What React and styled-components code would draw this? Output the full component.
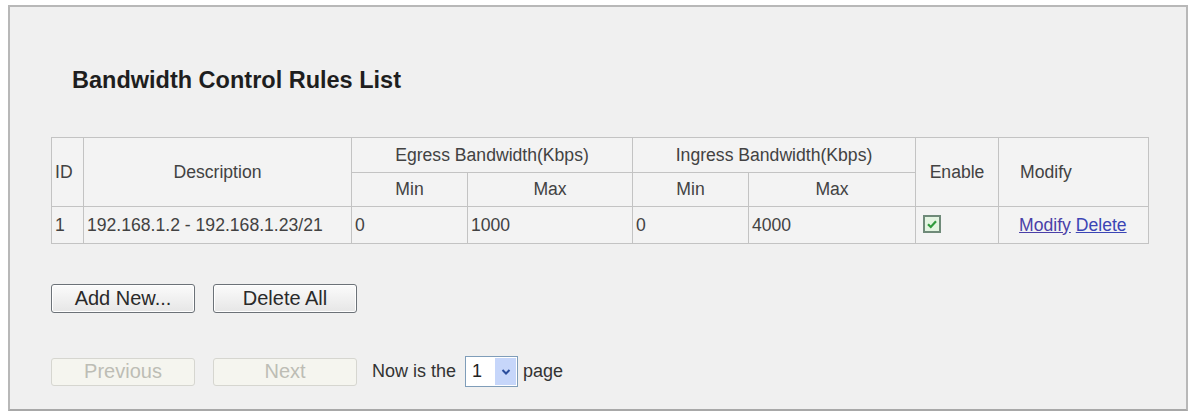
import React from 'react'
import styled, { createGlobalStyle } from 'styled-components'

const GlobalStyle = createGlobalStyle`
  html, body {
    margin: 0;
    padding: 0;
    background: #ffffff;
  }
  body {
    font-family: "Liberation Sans", Arial, sans-serif;
    color: #333;
  }
`

const Frame = styled.div`
  margin: 5px 2px 1px 8px;
  height: 406px;
  box-sizing: border-box;
  border: 2px solid #b8b8b8;
  border-bottom-color: #a8a8a8;
  background: #f0f0f0;
  padding: 59px 0 0 41px;
`

const Title = styled.h2`
  margin: 0 0 43px 21px;
  font-size: 23.5px;
  line-height: 28px;
  font-weight: 700;
  color: #1e1e1e;
`

const Table = styled.table`
  width: 1097px;
  border-collapse: collapse;
  table-layout: fixed;
  font-size: 17.6px;
  color: #424242;
  background: #f3f3f3;
`

const HeadCell = styled.td`
  border: 1px solid #c3c3c3;
  height: ${p => p.$h || 33}px;
  padding: ${p => (p.$left ? '0 0 0 ' + p.$left + 'px' : '0')};
  text-align: ${p => (p.$left ? 'left' : 'center')};
  vertical-align: middle;
  box-sizing: border-box;
`

const Cell = styled.td`
  border: 1px solid #c3c3c3;
  height: 37px;
  padding: 0 0 0 ${p => p.$pad ?? 3}px;
  text-align: left;
  vertical-align: middle;
  box-sizing: border-box;
`

const Check = styled.span`
  display: inline-block;
  width: 18px;
  height: 18px;
  box-sizing: border-box;
  border: 2px solid #6f8a79;
  background: #e3f4e1;
  vertical-align: middle;
  margin-top: -3px;

  svg {
    display: block;
  }
`

const Link = styled.a`
  color: ${p => p.$color || '#3b45b5'};
  text-decoration: underline;
  cursor: pointer;
`

const ButtonRow = styled.div`
  display: flex;
  align-items: center;
  gap: 18px;
  margin-top: 40px;
`

const PagerRow = styled.div`
  display: flex;
  align-items: center;
  gap: 18px;
  margin-top: 43px;
  font-size: 18px;
  color: #333;
`

const Button = styled.button`
  width: 144px;
  height: ${p => (p.disabled ? 28 : 29)}px;
  box-sizing: border-box;
  font-family: "Liberation Sans", Arial, sans-serif;
  font-size: 20px;
  padding: 0;
  border-radius: 3px;
  border: 1px solid ${p => (p.disabled ? '#d6d6d0' : '#6c7278')};
  background: ${p => (p.disabled ? '#f5f5ef' : 'linear-gradient(#fbfbfb, #e6e6e6)')};
  color: ${p => (p.disabled ? '#bdbdb5' : '#2a2a2a')};
  box-shadow: ${p => (p.disabled ? 'none' : 'inset 0 0 0 1px #ffffff')};
`

const PageText = styled.span`
  display: flex;
  align-items: center;
  gap: 5px;
  margin-left: -3px;
`

const Select = styled.span`
  display: inline-flex;
  align-items: stretch;
  width: 53px;
  height: 31px;
  box-sizing: border-box;
  border: 1px solid #7f9db9;
  background: #fff;
  margin: 0 0 0 4px;
`

const SelectValue = styled.span`
  flex: 1;
  display: flex;
  align-items: center;
  padding-left: 6px;
  color: #222;
`

const SelectArrow = styled.span`
  width: 21px;
  margin: 1px;
  background: #c6d6fa;
  display: flex;
  align-items: center;
  justify-content: center;
`

const cols = [32, 268, 116, 165, 116, 167, 83, 150]

export default function App() {
  return (
    <>
      <GlobalStyle />
      <Frame>
        <Title>Bandwidth Control Rules List</Title>
        <Table>
          <colgroup>
            {cols.map((w, i) => (
              <col key={i} style={{ width: w }} />
            ))}
          </colgroup>
          <tbody>
            <tr>
              <HeadCell rowSpan={2} $left={3}>ID</HeadCell>
              <HeadCell rowSpan={2}>Description</HeadCell>
              <HeadCell colSpan={2} $h={35}>Egress Bandwidth(Kbps)</HeadCell>
              <HeadCell colSpan={2} $h={35}>Ingress Bandwidth(Kbps)</HeadCell>
              <HeadCell rowSpan={2}>Enable</HeadCell>
              <HeadCell rowSpan={2} $left={21}>Modify</HeadCell>
            </tr>
            <tr>
              <HeadCell $h={34}>Min</HeadCell>
              <HeadCell $h={34}>Max</HeadCell>
              <HeadCell $h={34}>Min</HeadCell>
              <HeadCell $h={34}>Max</HeadCell>
            </tr>
            <tr>
              <Cell>1</Cell>
              <Cell>192.168.1.2 - 192.168.1.23/21</Cell>
              <Cell>0</Cell>
              <Cell>1000</Cell>
              <Cell>0</Cell>
              <Cell>4000</Cell>
              <Cell $pad={7}>
                <Check>
                  <svg width="14" height="14" viewBox="0 0 14 14">
                    <path d="M3 7.2 L5.8 10 L11 4.2" fill="none" stroke="#2f9a3c" strokeWidth="2.2" />
                  </svg>
                </Check>
              </Cell>
              <Cell $pad={20}>
                <Link $color="#4a3fa8">Modify</Link> <Link>Delete</Link>
              </Cell>
            </tr>
          </tbody>
        </Table>
        <ButtonRow>
          <Button>Add New...</Button>
          <Button>Delete All</Button>
        </ButtonRow>
        <PagerRow>
          <Button disabled>Previous</Button>
          <Button disabled>Next</Button>
          <PageText>
            Now is the
            <Select>
              <SelectValue>1</SelectValue>
              <SelectArrow>
                <svg width="10" height="8" viewBox="0 0 10 8">
                  <path d="M1.5 2 L5 5.5 L8.5 2" fill="none" stroke="#2a4d9c" strokeWidth="2" />
                </svg>
              </SelectArrow>
            </Select>
            page
          </PageText>
        </PagerRow>
      </Frame>
    </>
  )
}
